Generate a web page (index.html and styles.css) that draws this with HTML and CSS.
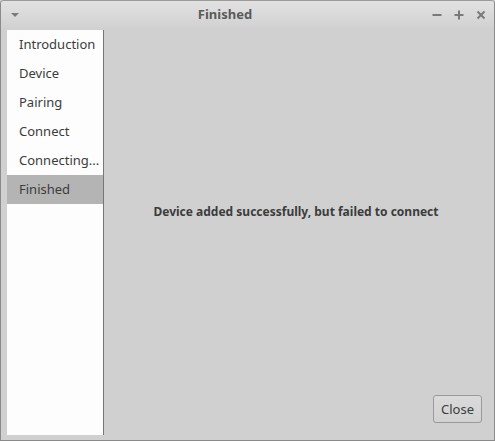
FILE: index.html
```html
<!DOCTYPE html>
<html>
<head>
<meta charset="utf-8">
<link rel="stylesheet" href="styles.css">
</head>
<body>
<div class="window">
  <div class="titlebar">
    <svg class="menu-btn" width="10" height="6" viewBox="0 0 10 6"><polygon points="1,1 9,1 5,5" fill="#7a7a7a"/></svg>
    <div class="title">Finished</div>
    <div class="controls">
      <svg width="12" height="12" viewBox="0 0 12 12"><rect x="1.5" y="5" width="9" height="2" fill="#7a7a7a"/></svg>
      <svg width="12" height="12" viewBox="0 0 12 12"><rect x="1.5" y="5" width="9" height="2" fill="#7a7a7a"/><rect x="5" y="1.5" width="2" height="9" fill="#7a7a7a"/></svg>
      <svg width="12" height="12" viewBox="0 0 12 12"><path d="M2.5 2.5 L9.5 9.5 M9.5 2.5 L2.5 9.5" stroke="#7a7a7a" stroke-width="2"/></svg>
    </div>
  </div>
  <div class="body">
    <ul class="sidebar">
      <li>Introduction</li>
      <li>Device</li>
      <li>Pairing</li>
      <li>Connect</li>
      <li>Connecting...</li>
      <li class="active">Finished</li>
    </ul>
    <div class="main">
      <div class="message">Device added successfully, but failed to connect</div>
      <div class="actions"><button class="btn">Close</button></div>
    </div>
  </div>
</div>
</body>
</html>
```
FILE: styles.css
```css
html, body { margin: 0; padding: 0; background: #d0d0d0; }
body { font-family: "Noto Sans", "Open Sans", sans-serif; font-size: 13px; color: #3c3c3c; }
.window {
  width: 495px; height: 441px; box-sizing: border-box;
  border: 1px solid #8a8a8a; border-top-color: #9a9a9a;
  border-radius: 4px 4px 0 0;
  background: #d0d0d0;
  display: flex; flex-direction: column;
  overflow: hidden;
}
.titlebar {
  height: 29px; flex: none;
  background: linear-gradient(#e2e2e2, #d0d0d0);
  display: flex; align-items: center;
  position: relative;
}
.menu-btn { margin-left: 9px; margin-top: -2px; }
.title {
  position: absolute; left: 0; right: 45px; top: 0; line-height: 27px;
  text-align: center; font-weight: bold; color: #5a5a5a; font-size: 13px;
}
.controls { margin-left: auto; margin-right: 7px; display: flex; gap: 10px; margin-top: -2px; }
.body { flex: 1; display: flex; padding: 0 0 5px 6px; min-height: 0; }
.sidebar {
  list-style: none; margin: 0; padding: 0;
  width: 97px; box-sizing: border-box;
  background: #fdfdfd; border-right: 1px solid #777;
}
.sidebar li { height: 29px; line-height: 29px; padding-left: 12px; color: #3c3c3c; }
.sidebar li.active { background: #b4b4b4; }
.main { flex: 1; display: flex; flex-direction: column; padding: 0 0 12px 0; }
.message { text-align: center; font-weight: bold; margin: 173px 6px 0 0; line-height: 18px; font-size: 12px; }
.actions { margin-top: auto; display: flex; justify-content: flex-end; padding-right: 12px; }
.btn {
  font-family: inherit; font-size: 13px; color: #3c3c3c;
  width: 49px; height: 28px; padding: 0;
  border: 1px solid #9a9a9a; border-radius: 3px;
  background: linear-gradient(#dadada, #d2d2d2);
}
```
